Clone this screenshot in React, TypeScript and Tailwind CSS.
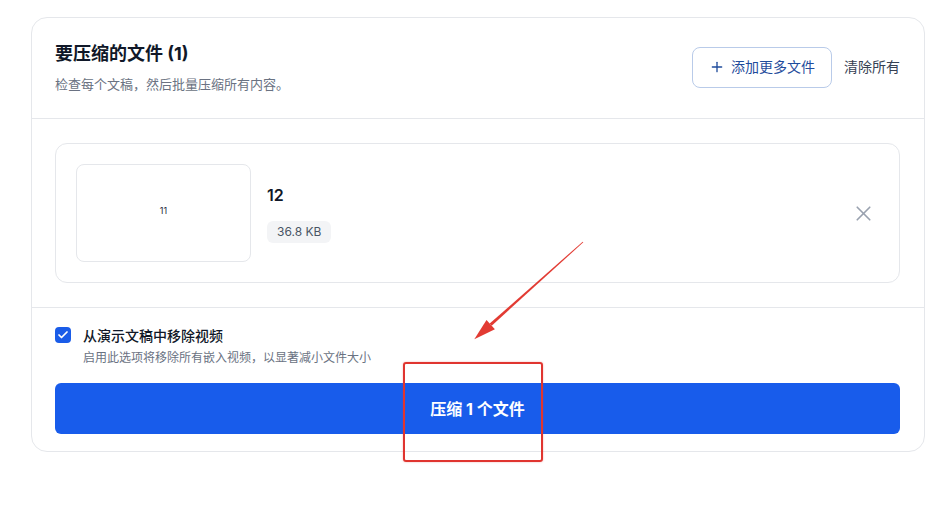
import { Plus, X, Check } from 'lucide-react'

export default function App() {
  return (
    <div
      className="relative w-[950px] h-[515px] bg-white overflow-hidden"
      style={{ fontFamily: 'Inter, "Noto Sans CJK SC", sans-serif' }}
    >
      <div className="pl-[31px] pr-[25px] pt-[17px]">
        <div className="rounded-2xl border border-gray-200 bg-white">
          {/* header */}
          <div className="flex items-center justify-between pl-[23px] pr-6 pt-[22px] pb-6 border-b border-gray-200">
            <div>
              <h2 className="text-lg leading-7 font-bold text-gray-900">要压缩的文件 (1)</h2>
              <p className="mt-[6px] text-[13px] leading-5 text-gray-500">检查每个文稿，然后批量压缩所有内容。</p>
            </div>
            <div className="flex items-center gap-3">
              <button className="flex items-center gap-1.5 h-[41px] px-4 rounded-lg border border-[#b9cbe9] text-[#1f4c9c] text-sm">
                <Plus size={16} strokeWidth={2} />
                添加更多文件
              </button>
              <button className="text-sm text-gray-700">清除所有</button>
            </div>
          </div>

          {/* file list */}
          <div className="pl-[23px] pr-6 pt-6 pb-6 border-b border-gray-200">
            <div className="flex items-center justify-between p-5 rounded-xl border border-gray-200">
              <div className="flex items-center gap-4">
                <div className="w-[175px] h-[98px] rounded-lg border border-gray-200 flex items-center justify-center">
                  <span className="mb-1 text-[9px] text-gray-800">11</span>
                </div>
                <div>
                  <div className="text-base leading-6 font-semibold text-gray-900">12</div>
                  <span className="mt-[14px] inline-block px-2.5 py-[3px] rounded-md bg-gray-100 text-xs text-gray-600">36.8 KB</span>
                </div>
              </div>
              <button className="w-8 h-8 flex items-center justify-center text-gray-400">
                <X size={25} strokeWidth={1.6} />
              </button>
            </div>
          </div>

          {/* options + action */}
          <div className="pl-[23px] pr-6 pt-[18px] pb-[17px]">
            <div className="flex gap-3">
              <div className="mt-[1px] w-4 h-4 rounded bg-[#1a5ce8] flex items-center justify-center text-white">
                <Check size={12} strokeWidth={3.5} />
              </div>
              <div>
                <div className="text-sm leading-5 font-medium text-gray-900">从演示文稿中移除视频</div>
                <div className="mt-1 text-xs leading-4 text-gray-500">启用此选项将移除所有嵌入视频，以显著减小文件大小</div>
              </div>
            </div>
            <button className="mt-[17px] w-full h-[51px] rounded-md bg-[#185ceb] text-white text-base font-bold">
              压缩 1 个文件
            </button>
          </div>
        </div>
      </div>

      {/* annotation: arrow */}
      <svg className="absolute inset-0 pointer-events-none" width="950" height="515" viewBox="0 0 950 515">
        <polygon
          points="583.3,242.3 582.7,241.7 489.7,323.5 491.7,325.7"
          fill="#e23b33"
        />
        <polygon points="474.3,339.3 494.9,329.3 486.5,319.9" fill="#e23b33" />
      </svg>

      {/* annotation: box */}
      <div className="absolute left-[403px] top-[362px] w-[140px] h-[100px] rounded-[3px] border-2 border-[#e0352f] shadow-[0_0_2px_rgba(224,53,47,0.4)] pointer-events-none" />
    </div>
  )
}
